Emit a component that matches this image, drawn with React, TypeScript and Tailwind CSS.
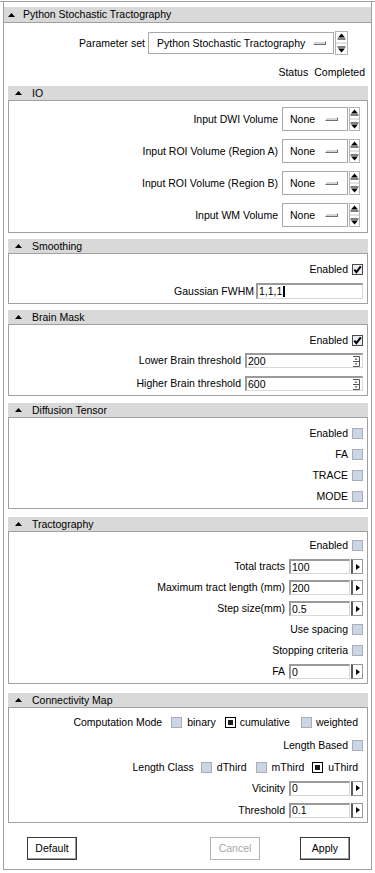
import React from "react";

function Tri() {
  return (
    <svg width="7" height="4" viewBox="0 0 7 4" className="shrink-0">
      <path d="M3.5 0 L7 4 L0 4 Z" fill="#000" />
    </svg>
  );
}

function OptArrows({ w, h }: { w: number; h: number }) {
  const mid = h / 2;
  const cx = w / 2;
  return (
    <svg width={w} height={h} viewBox={`0 0 ${w} ${h}`} className="shrink-0">
      <rect x="0.5" y="0.5" width={w - 1} height={h - 1} fill="#fff" stroke="#b4b4b4" />
      <path d={`M${cx} 2.5 L${cx + 3.5} 6.5 L${cx - 3.5} 6.5 Z`} fill="#000" />
      <line x1={cx - 4} y1="8" x2={cx + 4} y2="8" stroke="#000" />
      <line x1="1" y1={mid} x2={w - 1} y2={mid} stroke="#c8c8c8" />
      <line x1={cx - 4} y1={h - 8} x2={cx + 4} y2={h - 8} stroke="#000" />
      <path d={`M${cx - 3.5} ${h - 6.5} L${cx + 3.5} ${h - 6.5} L${cx} ${h - 2.5} Z`} fill="#000" />
    </svg>
  );
}

function Indicator() {
  return (
    <span className="inline-block w-[13px] h-[4px] bg-[#d4d4d4] border-t border-l border-t-white border-l-white border-r border-b border-r-[#707070] border-b-[#707070] shrink-0" />
  );
}

function OptionMenu({ text, w, h, pl, pr }: { text: string; w: number; h: number; pl: number; pr: number }) {
  return (
    <div
      className="bg-white border border-[#a8a8a8] flex items-center justify-between shrink-0"
      style={{ width: w, height: h, paddingLeft: pl, paddingRight: pr }}
    >
      <span>{text}</span>
      <Indicator />
    </div>
  );
}

function Unchecked() {
  return <span className="inline-block w-[11px] h-[11px] border border-[#a9adb4] bg-[#cad6e6] shrink-0" />;
}

function Checked() {
  return (
    <svg width="11" height="11" viewBox="0 0 11 11" className="shrink-0">
      <rect x="0.5" y="0.5" width="10" height="10" fill="#e9edf3" stroke="#4a4a4a" />
      <path d="M2.3 5.6 L4.4 8.2 L8.8 2.4" stroke="#000" strokeWidth="2" fill="none" />
    </svg>
  );
}

function RadioOn() {
  return (
    <svg width="11" height="11" viewBox="0 0 11 11" className="shrink-0">
      <rect x="0.5" y="0.5" width="10" height="10" fill="#fff" stroke="#000" />
      <rect x="3" y="3" width="5" height="5" fill="#1c1c1c" />
    </svg>
  );
}

function Entry({ w, h, value, children }: { w: number; h: number; value: string; children?: React.ReactNode }) {
  return (
    <div
      className="bg-white border-t-2 border-l-2 border-t-[#9a9a9a] border-l-[#9a9a9a] border-r border-b border-r-[#d8d8d8] border-b-[#d8d8d8] flex items-center shrink-0 pl-[1px]"
      style={{ width: w, height: h }}
    >
      <span>{value}</span>
      {children}
    </div>
  );
}

function SpinGlyph() {
  return (
    <svg width="7" height="11" viewBox="0 0 7 11" className="shrink-0 ml-auto mr-[2px]">
      <path d="M0 0.5 H6.5 V10.5 H0 M0 5.5 H6.5" stroke="#555" fill="none" />
      <path d="M3 2 L4.5 3.8 L1.5 3.8 Z" fill="#555" />
      <path d="M1.5 7.2 L4.5 7.2 L3 9 Z" fill="#555" />
    </svg>
  );
}

function ArrowBtn() {
  return (
    <div className="w-[12px] h-[15px] bg-white border border-[#9a9a9a] border-l-2 border-l-[#5a5a5a] flex items-center justify-center shrink-0 ml-[1px]">
      <svg width="4" height="6" viewBox="0 0 4 6">
        <path d="M0 0 L4 3 L0 6 Z" fill="#000" />
      </svg>
    </div>
  );
}

function Section({ title, className, children }: { title: string; className: string; children: React.ReactNode }) {
  return (
    <div className={"ml-[4px] mr-[3px] " + className}>
      <div className="h-[14px] bg-[#d9d9d9] flex items-center pl-[7px]">
        <Tri />
        <span className="ml-[10px]">{title}</span>
      </div>
      <div className="border border-[#a0a0a0] bg-white">{children}</div>
    </div>
  );
}

function CheckRow({ label, checked, h = 21 }: { label: string; checked?: boolean; h?: number }) {
  return (
    <div className="flex items-center justify-end pr-[4px]" style={{ height: h }}>
      <span>{label}</span>
      <span className="ml-[4px] flex">{checked ? <Checked /> : <Unchecked />}</span>
    </div>
  );
}

function NumRow({ label, value, h = 21 }: { label: string; value: string; h?: number }) {
  return (
    <div className="flex items-center justify-end pr-[4px]" style={{ height: h }}>
      <span>{label}</span>
      <div className="ml-[4px] flex items-center">
        <Entry w={61} h={15} value={value} />
        <ArrowBtn />
      </div>
    </div>
  );
}

function IORow({ label }: { label: string }) {
  return (
    <div className="flex items-center justify-end h-[24px] pr-[7px]">
      <span>{label}</span>
      <div className="ml-[4px] flex items-center">
        <OptionMenu text="None" w={66} h={24} pl={7} pr={9} />
        <span className="ml-[1px] flex">
          <OptArrows w={11} h={24} />
        </span>
      </div>
    </div>
  );
}

export default function App() {
  return (
    <div className="w-[375px] h-[873px] bg-white pt-[1px] font-['Liberation_Sans',Arial,sans-serif] text-[10.5px] text-black leading-none">
      <div className="h-[1px] bg-[#a0a0a0]" />
      <div className="ml-[3px] w-[369px] h-[868px] border-x border-b border-[#a0a0a0] pt-[5px] flex flex-col">
        <div className="h-[16px] bg-[#d9d9d9] border-b border-[#a0a0a0] flex items-center pl-[4px]">
          <Tri />
          <span className="ml-[8px]">Python Stochastic Tractography</span>
        </div>

        <div className="mt-[8px] h-[24px] flex items-center justify-end pr-[23px]">
          <span>Parameter set</span>
          <div className="ml-[3px] flex items-center">
            <OptionMenu text="Python Stochastic Tractography" w={186} h={22} pl={8} pr={7} />
            <span className="ml-[1px] flex">
              <OptArrows w={13} h={24} />
            </span>
          </div>
        </div>

        <div className="mt-[10px] h-[14px] flex items-center justify-end pr-[6px]">
          <span>Status</span>
          <span className="ml-[6px]">Completed</span>
        </div>

        <Section title="IO" className="mt-[7px]">
          <div className="flex flex-col gap-[8px] pt-[6px] pb-[5px]">
            <IORow label="Input DWI Volume" />
            <IORow label="Input ROI Volume (Region A)" />
            <IORow label="Input ROI Volume (Region B)" />
            <IORow label="Input WM Volume" />
          </div>
        </Section>

        <Section title="Smoothing" className="mt-[6px]">
          <div className="pt-[5px] pb-[4px]">
            <CheckRow label="Enabled" checked />
            <div className="mt-[3px] h-[16px] flex items-center justify-end pr-[4px]">
              <span>Gaussian FWHM</span>
              <div className="ml-[2px]">
                <Entry w={107} h={16} value="1,1,1">
                  <span className="inline-block w-[2px] h-[11px] bg-black ml-[1px]" />
                </Entry>
              </div>
            </div>
          </div>
        </Section>

        <Section title="Brain Mask" className="mt-[6px]">
          <div className="pt-[5px] pb-[4px]">
            <CheckRow label="Enabled" checked />
            <div className="mt-[2px] h-[15px] flex items-center justify-end pr-[4px]">
              <span>Lower Brain threshold</span>
              <div className="ml-[4px]">
                <Entry w={118} h={15} value="200">
                  <SpinGlyph />
                </Entry>
              </div>
            </div>
            <div className="mt-[8px] h-[15px] flex items-center justify-end pr-[4px]">
              <span>Higher Brain threshold</span>
              <div className="ml-[4px]">
                <Entry w={118} h={15} value="600">
                  <SpinGlyph />
                </Entry>
              </div>
            </div>
          </div>
        </Section>

        <Section title="Diffusion Tensor" className="mt-[7px]">
          <div className="pt-[5px] pb-[1px]">
            <CheckRow label="Enabled" />
            <CheckRow label="FA" />
            <CheckRow label="TRACE" />
            <CheckRow label="MODE" />
          </div>
        </Section>

        <Section title="Tractography" className="mt-[8px]">
          <div className="pt-[3px] pb-[1px]">
            <CheckRow label="Enabled" />
            <NumRow label="Total tracts" value="100" />
            <NumRow label="Maximum tract length (mm)" value="200" />
            <NumRow label="Step size(mm)" value="0.5" />
            <CheckRow label="Use spacing" />
            <CheckRow label="Stopping criteria" />
            <NumRow label="FA" value="0" />
          </div>
        </Section>

        <Section title="Connectivity Map" className="mt-[9px]">
          <div className="pt-[4px] pb-[1px]">
            <div className="h-[21px] flex items-center justify-end pr-[9px]">
              <span>Computation Mode</span>
              <span className="ml-[9px] flex"><Unchecked /></span>
              <span className="ml-[5px]">binary</span>
              <span className="ml-[9px] flex"><RadioOn /></span>
              <span className="ml-[4px]">cumulative</span>
              <span className="ml-[11px] flex"><Unchecked /></span>
              <span className="ml-[4px]">weighted</span>
            </div>
            <CheckRow label="Length Based" h={24} />
            <div className="h-[20px] flex items-center justify-end pr-[9px]">
              <span>Length Class</span>
              <span className="ml-[7px] flex"><Unchecked /></span>
              <span className="ml-[5px]">dThird</span>
              <span className="ml-[9px] flex"><Unchecked /></span>
              <span className="ml-[5px]">mThird</span>
              <span className="ml-[8px] flex"><RadioOn /></span>
              <span className="ml-[5px]">uThird</span>
            </div>
            <NumRow label="Vicinity" value="0" h={22} />
            <NumRow label="Threshold" value="0.1" h={22} />
          </div>
        </Section>

        <div className="mt-[14px] h-[23px] flex items-center pl-[23px] pr-[21px]">
          <button className="w-[50px] h-[23px] bg-white border border-[#3a3a3a] shadow-[inset_-1px_-1px_0_#9a9a9a] text-[10.5px] leading-none">
            Default
          </button>
          <button className="ml-auto w-[50px] h-[23px] bg-white border border-[#b4b4b4] text-[#a8a8a8] text-[10.5px] leading-none">
            Cancel
          </button>
          <button className="ml-[40px] w-[50px] h-[23px] bg-white border border-[#3a3a3a] shadow-[inset_-1px_-1px_0_#9a9a9a] text-[10.5px] leading-none">
            Apply
          </button>
        </div>
      </div>
    </div>
  );
}
